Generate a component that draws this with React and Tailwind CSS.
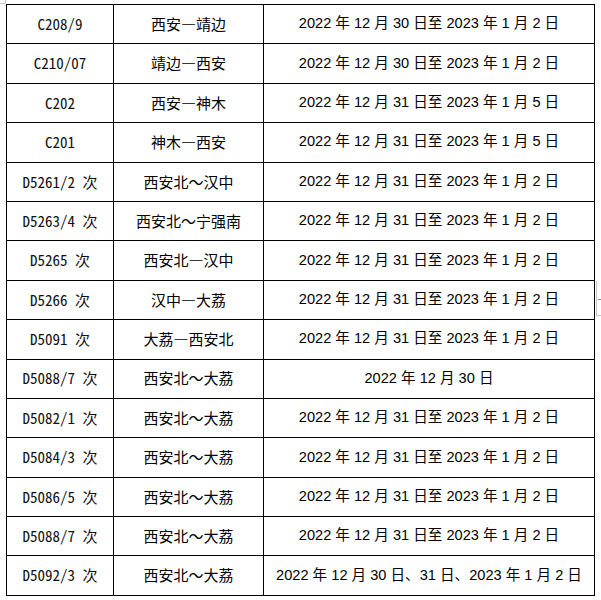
const rows = [
    ['C208/9', '西安—靖边', '2022 年 12 月 30 日至 2023 年 1 月 2 日'],
    ['C210/07', '靖边—西安', '2022 年 12 月 30 日至 2023 年 1 月 2 日'],
    ['C202', '西安—神木', '2022 年 12 月 31 日至 2023 年 1 月 5 日'],
    ['C201', '神木—西安', '2022 年 12 月 31 日至 2023 年 1 月 5 日'],
    ['D5261/2 次', '西安北～汉中', '2022 年 12 月 31 日至 2023 年 1 月 2 日'],
    ['D5263/4 次', '西安北～宁强南', '2022 年 12 月 31 日至 2023 年 1 月 2 日'],
    ['D5265 次', '西安北—汉中', '2022 年 12 月 31 日至 2023 年 1 月 2 日'],
    ['D5266 次', '汉中—大荔', '2022 年 12 月 31 日至 2023 年 1 月 2 日'],
    ['D5091 次', '大荔—西安北', '2022 年 12 月 31 日至 2023 年 1 月 2 日'],
    ['D5088/7 次', '西安北～大荔', '2022 年 12 月 30 日'],
    ['D5082/1 次', '西安北～大荔', '2022 年 12 月 31 日至 2023 年 1 月 2 日'],
    ['D5084/3 次', '西安北～大荔', '2022 年 12 月 31 日至 2023 年 1 月 2 日'],
    ['D5086/5 次', '西安北～大荔', '2022 年 12 月 31 日至 2023 年 1 月 2 日'],
    ['D5088/7 次', '西安北～大荔', '2022 年 12 月 31 日至 2023 年 1 月 2 日'],
    ['D5092/3 次', '西安北～大荔', '2022 年 12 月 30 日、31 日、2023 年 1 月 2 日'],
]

const mono = { fontFamily: '"Noto Sans Mono CJK SC", "Noto Sans CJK SC", monospace' }
const hei = { fontFamily: '"Noto Sans CJK SC", sans-serif' }
const mixed = { fontFamily: '"Liberation Sans", "Noto Sans CJK SC", sans-serif' }

export default function App() {
    return (
        <div lang="zh-CN" className="relative w-[601px] h-[600px] bg-white pl-[6px] pt-[4px] text-black">
            {/* word's crop marks */}
            <div className="absolute left-0 top-[3px] w-[6px] h-px bg-[#c8c8c8]" />
            <div className="absolute left-[5px] top-0 w-px h-[4px] bg-[#c8c8c8]" />
            <div className="absolute left-[596px] top-[281px] w-px h-[35px] bg-[#c8c8c8]" />
            <div className="absolute left-[596px] top-[315px] w-[5px] h-px bg-[#c8c8c8]" />
            <div className="absolute left-[598px] top-[299px] w-[3px] h-px bg-[#888]" />

            <div className="grid grid-cols-[106px_149px_330px] auto-rows-[38.4px] gap-px bg-black p-px w-[589px]">
                {rows.map((r, i) => (
                    <div key={i} className="contents">
                        <div className="bg-white flex items-center justify-center text-[15px] text-[#111]" style={mono}>{r[0]}</div>
                        <div className="bg-white flex items-center justify-center text-[15px] [font-feature-settings:'fwid']" style={hei}>{r[1]}</div>
                        <div className="bg-white flex items-center justify-center text-[14.6px] whitespace-pre" style={mixed}>{r[2]}</div>
                    </div>
                ))}
            </div>
        </div>
    )
}
